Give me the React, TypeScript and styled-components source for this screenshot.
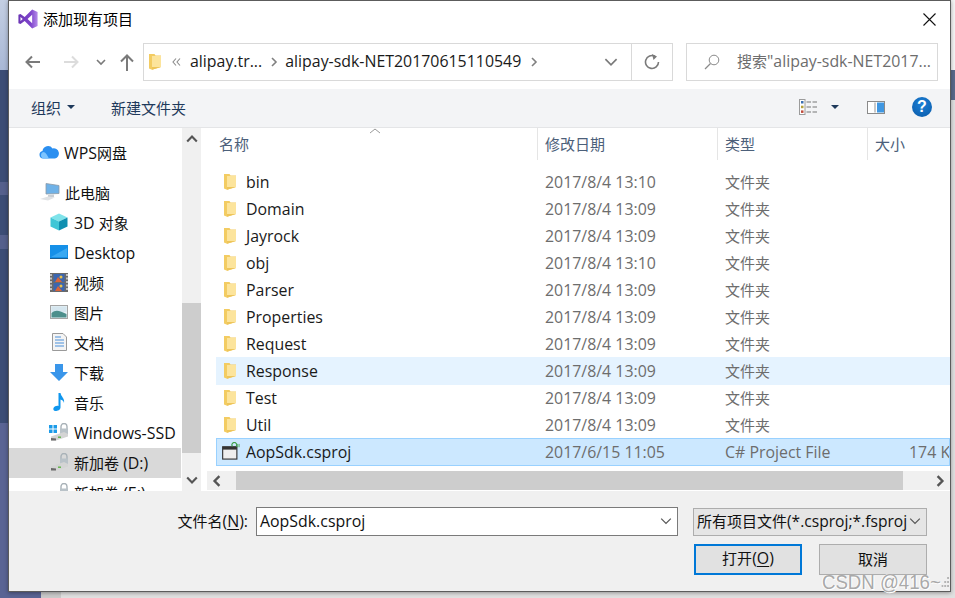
import React from 'react';
import styled, { createGlobalStyle } from 'styled-components';

const GlobalStyle = createGlobalStyle`
  html, body {
    margin: 0;
    padding: 0;
    background: #e2e2e2;
  }
  * {
    box-sizing: border-box;
  }
`;

const Page = styled.div`
  position: relative;
  width: 955px;
  height: 598px;
  overflow: hidden;
  font-family: "Open Sans", "Noto Sans CJK SC", sans-serif;
  font-size: 15px;
  color: #000;
  background:
    linear-gradient(#c4cfe3, #a9b8d6) 0 0 / 8px 70px no-repeat,
    linear-gradient(#55608c, #55608c) 0 182px / 8px 13px no-repeat,
    linear-gradient(#55608c, #55608c) 0 235px / 8px 14px no-repeat,
    linear-gradient(#3c4d75, #3c4d75) 0 70px / 8px 353px no-repeat,
    linear-gradient(#5a6494, #5a6494) 0 423px / 41px 175px no-repeat,
    linear-gradient(#cacaca, #cacaca) 41px 591px / 20px 7px no-repeat,
    linear-gradient(#f4f4f4, #f4f4f4) 951px 0 / 4px 70px no-repeat,
    linear-gradient(#5a6a8c, #5a6a8c) 951px 70px / 4px 30px no-repeat,
    #e0e0e0;
`;

// Latin runs come out narrower than the CJK ones at the same size
const Latin = styled.span`
  font-size: 15.9px;
`;

const ComboLatin = styled.span`
  font-size: 15.6px;
`;

const Dialog = styled.div`
  display: flex;
  flex-direction: column;
  width: 943px;
  height: 592px;
  margin-left: 8px;
  background: #fff;
  border: 1px solid #5c5c5c;
  box-shadow: 0 1px 4px rgba(0, 0, 0, 0.35);
`;

const TitleBar = styled.div`
  display: flex;
  align-items: center;
  height: 36px;
  padding: 0 14px 0 9px;
  flex: none;
`;

const TitleText = styled.span`
  margin: 0 0 2px 5px;
  flex: 1;
`;

const NavBar = styled.div`
  display: flex;
  align-items: center;
  height: 52px;
  padding: 6px 0 8px 16px;
  flex: none;
`;

const NavButton = styled.div<{ $gap: number }>`
  display: flex;
  margin-right: ${({ $gap }) => $gap}px;
`;

const AddressBox = styled.div`
  display: flex;
  align-items: center;
  width: 530px;
  height: 38px;
  padding-left: 5px;
  border: 1.5px solid #d9d9d9;
`;

const Crumb = styled(Latin)`
  margin-bottom: 2px;
  color: #1a1a1a;
  white-space: nowrap;
`;

const CrumbMark = styled.span<{ $left: number; $right: number }>`
  display: flex;
  margin: 0 ${({ $right }) => $right}px 0 ${({ $left }) => $left}px;
`;

const AddressEnd = styled.div`
  display: flex;
  align-items: center;
  justify-content: center;
  width: 41px;
  height: 100%;
  margin-left: auto;
  border-left: 1.5px solid #d9d9d9;
`;

const SearchBox = styled.div`
  display: flex;
  align-items: center;
  width: 252px;
  height: 38px;
  margin-left: 13px;
  padding-left: 17px;
  border: 1.5px solid #d9d9d9;
  color: #6d6d6d;
  white-space: nowrap;
  overflow: hidden;
`;

const SearchText = styled.span`
  margin: 0 0 2px 17px;
`;

const Toolbar = styled.div`
  display: flex;
  align-items: center;
  height: 39px;
  padding: 0 18px 2px 22px;
  background: #f3f4f6;
  border-bottom: 1px solid #e4e5e7;
  color: #1e395b;
  flex: none;
`;

const ToolButton = styled.span<{ $left?: number }>`
  display: flex;
  align-items: center;
  margin-left: ${({ $left }) => $left ?? 0}px;
`;

const Caret = styled.i<{ $left: number }>`
  width: 0;
  height: 0;
  margin-left: ${({ $left }) => $left}px;
  border-left: 4px solid transparent;
  border-right: 4px solid transparent;
  border-top: 4px solid #1e395b;
`;

const ToolSpacer = styled.span`
  flex: 1;
`;

const HelpBadge = styled.span`
  display: flex;
  align-items: center;
  justify-content: center;
  width: 20px;
  height: 20px;
  margin-left: 27px;
  border-radius: 50%;
  background: radial-gradient(circle at 50% 35%, #1c7fd6, #0a5aa8);
  color: #fff;
  font-family: "Liberation Sans", sans-serif;
  font-size: 16px;
  font-weight: 700;
`;

const Main = styled.div`
  display: flex;
  height: 363px;
  flex: none;
`;

const NavPane = styled.div`
  width: 173px;
  padding-top: 10px;
  overflow: hidden;
  flex: none;
`;

const TreeRow = styled.div<{ $indent: number; $selected?: boolean; $gapAfter?: boolean }>`
  display: flex;
  align-items: center;
  gap: 5px;
  width: 172px;
  height: 30px;
  padding-left: ${({ $indent }) => $indent}px;
  margin-bottom: ${({ $gapAfter }) => ($gapAfter ? 10 : 0)}px;
  background: ${({ $selected }) => ($selected ? '#d9d9d9' : 'transparent')};
  color: #111;
  white-space: nowrap;
  flex: none;
`;

const TreeIcon = styled.span`
  display: flex;
  align-items: center;
  justify-content: center;
  width: 20px;
  height: 20px;
  margin-bottom: 2px;
  flex: none;
`;

const TreeLabel = styled.span<{ $lift: number }>`
  margin-bottom: ${({ $lift }) => $lift}px;
`;

const VScroll = styled.div`
  display: flex;
  flex-direction: column;
  width: 19px;
  background: #f0f0f0;
  flex: none;
`;

const ScrollEnd = styled.div`
  display: flex;
  align-items: center;
  justify-content: center;
  height: 22px;
  flex: none;
`;

const VTrack = styled.div`
  flex: 1;
  padding: 153px 0 16px;
`;

const Thumb = styled.div`
  height: 100%;
  background: #cdcdcd;
`;

const ListPane = styled.div`
  display: flex;
  flex-direction: column;
  flex: 1;
  min-width: 0;
  overflow: hidden;
`;

const ColumnHeader = styled.div`
  position: relative;
  display: flex;
  height: 32px;
  flex: none;
  color: #4c607a;
`;

const HeaderCell = styled.div<{ $width: number; $pad: number; $last?: boolean }>`
  display: flex;
  align-items: center;
  width: ${({ $width }) => $width}px;
  padding: 0 0 2px ${({ $pad }) => $pad}px;
  border-right: ${({ $last }) => ($last ? 'none' : '1px solid #e5e5e5')};
  flex: none;
`;

const SortMark = styled.span`
  position: absolute;
  left: 168px;
  top: 0;
  display: flex;
`;

const FileList = styled.div`
  flex: 1;
  padding: 9px 0 0 15px;
  overflow: hidden;
`;

const FileRow = styled.div<{ $state?: 'hover' | 'selected' }>`
  display: grid;
  grid-template-columns: 320px 180px 150px 1fr;
  align-items: center;
  height: ${({ $state }) => ($state ? 28 : 27)}px;
  margin-top: ${({ $state }) => ($state ? -1 : 0)}px;
  padding: ${({ $state }) => ($state ? 1 : 0)}px 0 2px;
  border: 1px solid ${({ $state }) => ($state === 'selected' ? '#99d1ff' : 'transparent')};
  background: ${({ $state }) =>
    $state === 'selected' ? '#cce8ff' : $state === 'hover' ? '#e5f3ff' : 'transparent'};
  white-space: nowrap;
`;

const NameCell = styled.div`
  display: flex;
  align-items: center;
  gap: 6px;
  padding-left: 5px;
  color: #1a1a1a;
`;

const FileIcon = styled.span<{ $pad?: number }>`
  display: flex;
  align-items: center;
  width: 18px;
  height: 20px;
  padding-left: ${({ $pad }) => $pad ?? 0}px;
  flex: none;
`;

const InfoCell = styled.div`
  padding-left: 8px;
  color: #6d6d6d;
`;

const SizeCell = styled(InfoCell)`
  padding-left: 42px;
  overflow: hidden;
`;

const HScroll = styled.div`
  display: flex;
  height: 19px;
  margin: 0 0 1px 6px;
  background: #f0f0f0;
  flex: none;
`;

const HEnd = styled.div<{ $width: number; $pad: number }>`
  display: flex;
  align-items: center;
  width: ${({ $width }) => $width}px;
  padding-left: ${({ $pad }) => $pad}px;
  flex: none;
`;

const HThumb = styled.div`
  flex: 1;
  background: #cdcdcd;
`;

const Footer = styled.div`
  display: flex;
  flex-direction: column;
  flex: 1;
  padding: 16px 23px 0 0;
  background: #f0f0f0;
`;

const FieldRow = styled.div`
  display: flex;
  align-items: center;
  justify-content: flex-end;
  height: 29px;
`;

const FieldLabel = styled.span`
  margin: 0 8px 2px 0;
  color: #111;
  white-space: nowrap;
  u {
    text-underline-offset: 2px;
  }
`;

const NameInput = styled.div`
  display: flex;
  align-items: center;
  justify-content: space-between;
  width: 422px;
  height: 29px;
  padding: 0 5px 2px 3px;
  background: #fff;
  border: 1px solid #7a7a7a;
  color: #111;
`;

const FilterCombo = styled.div`
  display: flex;
  align-items: center;
  justify-content: space-between;
  width: 234px;
  height: 28px;
  margin-left: 15px;
  padding: 0 5px 2px 3px;
  background: #e5e5e5;
  border: 1px solid #adadad;
  color: #111;
  white-space: nowrap;
  overflow: hidden;
`;

const ButtonRow = styled.div`
  display: flex;
  justify-content: flex-end;
  gap: 17px;
  margin-top: 8px;
`;

const DialogButton = styled.div<{ $primary?: boolean }>`
  display: flex;
  align-items: center;
  justify-content: center;
  width: 108px;
  height: 31px;
  padding-bottom: 3px;
  background: #e1e1e1;
  border: ${({ $primary }) => ($primary ? '2px solid #0078d7' : '1px solid #adadad')};
  color: #111;
  white-space: pre;
  u {
    text-underline-offset: 2px;
  }
`;

const Watermark = styled.div`
  position: absolute;
  left: 822px;
  top: 571px;
  display: flex;
  align-items: center;
  gap: 1px;
  height: 22px;
  font-family: "Liberation Sans", sans-serif;
  font-size: 19.5px;
  color: #a9a9a9;
  text-shadow: 1px 1px 0 #fff, -1px 0 0 #fff;
  white-space: nowrap;
  transform: scaleX(0.955);
  transform-origin: left center;
`;

const Chevron = ({ dir, color = '#6a6a6a', size = 10, width = 1.6 }: { dir: 'up' | 'down' | 'left' | 'right'; color?: string; size?: number; width?: number }) => {
  const d = {
    up: 'M1 7 L5 3 L9 7',
    down: 'M1 3 L5 7 L9 3',
    left: 'M7 1 L3 5 L7 9',
    right: 'M3 1 L7 5 L3 9',
  }[dir];
  return (
    <svg width={size} height={size} viewBox="0 0 10 10">
      <path d={d} fill="none" stroke={color} strokeWidth={width} />
    </svg>
  );
};

const VsLogo = () => (
  <svg width="20" height="20" viewBox="0 0 24 24">
    <defs>
      <linearGradient id="vsg" x1="0" y1="0" x2="1" y2="0">
        <stop offset="0" stopColor="#6b35b5" />
        <stop offset="0.65" stopColor="#7f45cc" />
        <stop offset="1" stopColor="#b48ae8" />
      </linearGradient>
    </defs>
    <path
      fillRule="evenodd"
      fill="url(#vsg)"
      d="M17 0.5 L23.5 3.5 V20.5 L17 23.5 L8 14.5 L3 18 L0.5 17 V7 L3 6 L8 9.5 Z M17 7 L11.5 12 L17 17 Z M3 9.5 V14.5 L5.7 12 Z"
    />
  </svg>
);

const FolderIcon = () => (
  <svg width="12" height="16" viewBox="0 0 12 16">
    <path d="M0 0 H5.5 L6.5 1.5 H12 V13 L3 15.8 L0 14.5 Z" fill="#f3cc62" />
    <path d="M3 2 H12 V13 H3 Z" fill="#fce49c" />
    <path d="M3 13 H12 L3 15.8 Z" fill="#eec55a" />
  </svg>
);

const ProjectIcon = () => (
  <svg width="19" height="19" viewBox="0 0 19 19">
    <rect x="0.7" y="4.5" width="15" height="13" fill="#eeeeee" stroke="#333" strokeWidth="1.2" />
    <rect x="0.7" y="4.5" width="15" height="3" fill="#333" />
    <path d="M11 3 A2.5 2.5 0 1 1 15 3" fill="none" stroke="#3fa14b" strokeWidth="1.2" transform="translate(0 1)" />
    <path d="M16 1.5 V5 M18 1.5 V5" stroke="#3fa14b" strokeWidth="0.9" />
  </svg>
);

const CloudIcon = () => (
  <svg width="20" height="14" viewBox="0 0 20 14">
    <path d="M4 13.5 A3.8 3.8 0 0 1 3.5 6 A5.5 5.5 0 0 1 13.5 3.5 A4.5 4.5 0 0 1 16 13.5 Z" fill="#2b8ff0" />
    <path d="M4 13.5 A3.6 3.6 0 0 1 4 7 C7 7 8 10 10 13.5 Z" fill="#7cc4ff" />
  </svg>
);

const ComputerIcon = () => (
  <svg width="20" height="18" viewBox="0 0 20 18">
    <path d="M6 0.5 L19 2.5 V10.5 L6 11 Z" fill="#6fb2e8" stroke="#8d9aa6" strokeWidth="0.8" />
    <path d="M8 12 L14 11.5 L14 14 L8 14 Z" fill="#c9ced3" />
    <path d="M0 16 L8 13.5 L15 14.5 L8 17.5 Z" fill="#dfe2e5" />
  </svg>
);

const CubeIcon = () => (
  <svg width="18" height="18" viewBox="0 0 18 18">
    <path d="M9 0.5 L17.5 4.5 L9 8.5 L0.5 4.5 Z" fill="#7fe3ea" />
    <path d="M0.5 4.5 L9 8.5 V17.5 L0.5 13.5 Z" fill="#3fc6d6" />
    <path d="M17.5 4.5 L9 8.5 V17.5 L17.5 13.5 Z" fill="#0f8fb0" />
  </svg>
);

const DesktopIcon = () => (
  <svg width="18" height="14" viewBox="0 0 18 14">
    <rect width="18" height="13" fill="#1590e8" />
    <path d="M1 12 L17 3 V12 Z" fill="#3aa9f2" />
    <path d="M0 13 H18 V14 H0 Z" fill="#1c5f92" />
  </svg>
);

const FilmIcon = () => (
  <svg width="18" height="19" viewBox="0 0 18 19">
    <rect width="18" height="19" fill="#6a6a6a" />
    <path d="M1 1 V18 M17 1 V18" stroke="#d8d8d8" strokeWidth="1.6" strokeDasharray="2 1.5" />
    <rect x="3.5" y="1" width="11" height="8" fill="#3b66b0" />
    <rect x="3.5" y="10" width="11" height="8" fill="#3b66b0" />
    <path d="M5 9 L8 4 L12 9 Z M5 18 L8 13 L12 18 Z" fill="#d8643a" />
    <circle cx="11" cy="4" r="1.5" fill="#e8c24a" />
    <circle cx="11" cy="13" r="1.5" fill="#e8c24a" />
  </svg>
);

const PictureIcon = () => (
  <svg width="18" height="14" viewBox="0 0 18 14">
    <rect x="0.5" y="0.5" width="17" height="13" fill="#e8f1f6" stroke="#a5a5a5" />
    <path d="M1.5 1.5 H16.5 V7 H1.5 Z" fill="#d5e6ef" />
    <path d="M1.5 8 C6 4 10 6 16.5 9 V12.5 H1.5 Z" fill="#4d8f8c" />
  </svg>
);

const DocIcon = () => (
  <svg width="15" height="18" viewBox="0 0 15 18">
    <path d="M0.5 0.5 H11 L14.5 4 V17.5 H0.5 Z" fill="#f4f4f4" stroke="#9a9a9a" />
    <path d="M3 4 H9 M3 7 H12 M3 10 H12 M3 13 H12" stroke="#4a90d9" strokeWidth="1.2" />
  </svg>
);

const DownloadIcon = () => (
  <svg width="18" height="17" viewBox="0 0 18 17">
    <path d="M5 0 H13 V8 H18 L9 17 L0 8 H5 Z" fill="#3a96ea" />
  </svg>
);

const MusicIcon = () => (
  <svg width="12" height="18" viewBox="0 0 12 18">
    <path d="M5.5 0 H7.5 C8 4 12 5 11 10 C10.5 7.5 9 7 7.5 6.5 V14.5 C7.5 17 4.5 18 2.5 18 C0.5 18 0 16.5 0.5 15 C1.5 13 4 12.5 5.5 13 Z" fill="#0f96ee" />
  </svg>
);

const DriveIcon = ({ win }: { win?: boolean }) => (
  <svg width="20" height="18" viewBox="0 0 20 18">
    {win && <path d="M0 2 H3.5 V5.5 H0 Z M4.5 2 H8 V5.5 H4.5 Z M0 6.5 H3.5 V10 H0 Z M4.5 6.5 H8 V10 H4.5 Z" fill="#1c9be8" />}
    <path d="M12 6 V3.5 A3 3 0 0 1 18 3.5 V6" fill="none" stroke="#a9b2b8" strokeWidth="1.4" />
    <rect x="11" y="5.5" width="8" height="6.5" fill="#b9c2c8" />
    <path d="M2 13.5 L15 9 L19 11 V13.5 L7 17.5 H2 Z" fill="#d4d4d4" />
    <path d="M2 15 L7 15.5 V17.5 H2 Z" fill="#6a6a6a" />
    <rect x="9" y="13.5" width="3" height="1.4" fill="#5fb548" />
  </svg>
);

const ViewIcon = () => (
  <svg width="19" height="16" viewBox="0 0 19 16">
    <rect x="0.5" y="0.5" width="5.5" height="15" fill="#fff" stroke="#9b9b9b" />
    <rect x="2" y="2" width="2.5" height="2.5" fill="#3a6fb0" />
    <rect x="2" y="6.7" width="2.5" height="2.5" fill="#b5a03a" />
    <rect x="2" y="11.4" width="2.5" height="2.5" fill="#c04a3a" />
    <path d="M7.5 3 H12 M13.5 3 H18 M7.5 8 H12 M13.5 8 H18 M7.5 13 H12 M13.5 13 H18" stroke="#777" strokeWidth="1.1" />
  </svg>
);

const PanelIcon = () => (
  <svg width="18" height="13" viewBox="0 0 18 13">
    <rect x="0.5" y="0.5" width="17" height="12" fill="#fff" stroke="#8a8a8a" />
    <rect x="10" y="1.5" width="7" height="10" fill="#3f97e2" />
    <rect x="7" y="1.5" width="2" height="10" fill="#c9c9c9" />
  </svg>
);

const WatermarkDots = () => (
  <svg width="9" height="10" viewBox="0 0 9 10">
    <path d="M6 0 H8 V2 H6 Z M3 4 H5 V6 H3 Z M6 4 H8 V6 H6 Z M0 8 H2 V10 H0 Z M3 8 H5 V10 H3 Z M6 8 H8 V10 H6 Z" fill="#b5b5b5" />
  </svg>
);

const folders = [
  ['bin', '2017/8/4 13:10'],
  ['Domain', '2017/8/4 13:09'],
  ['Jayrock', '2017/8/4 13:09'],
  ['obj', '2017/8/4 13:10'],
  ['Parser', '2017/8/4 13:09'],
  ['Properties', '2017/8/4 13:09'],
  ['Request', '2017/8/4 13:09'],
  ['Response', '2017/8/4 13:09'],
  ['Test', '2017/8/4 13:09'],
  ['Util', '2017/8/4 13:09'],
];

const App = () => (
  <Page>
    <GlobalStyle />
    <Dialog>
      <TitleBar>
        <VsLogo />
        <TitleText>添加现有项目</TitleText>
        <svg width="13" height="13" viewBox="0 0 13 13">
          <path d="M0.5 0.5 L12.5 12.5 M12.5 0.5 L0.5 12.5" stroke="#111" strokeWidth="1.1" />
        </svg>
      </TitleBar>

      <NavBar>
        <NavButton $gap={24}>
          <svg width="15" height="14" viewBox="0 0 15 14">
            <path d="M15 7 H1.5 M7 1.5 L1.5 7 L7 12.5" fill="none" stroke="#7a7a7a" strokeWidth="2" />
          </svg>
        </NavButton>
        <NavButton $gap={17}>
          <svg width="15" height="14" viewBox="0 0 15 14">
            <path d="M0 7 H13.5 M8 1.5 L13.5 7 L8 12.5" fill="none" stroke="#dcdcdc" strokeWidth="2" />
          </svg>
        </NavButton>
        <NavButton $gap={14}>
          <Chevron dir="down" color="#7a7a7a" />
        </NavButton>
        <NavButton $gap={9}>
          <svg width="14" height="17" viewBox="0 0 14 17">
            <path d="M7 17 V2 M1 7.5 L7 1.5 L13 7.5" fill="none" stroke="#7a7a7a" strokeWidth="2" />
          </svg>
        </NavButton>
        <AddressBox>
          <FolderIcon />
          <CrumbMark $left={11} $right={9}>
            <svg width="9" height="10" viewBox="0 0 9 10">
              <path d="M4 1.5 L1 5 L4 8.5 M8 1.5 L5 5 L8 8.5" fill="none" stroke="#8a8a8a" strokeWidth="1.1" />
            </svg>
          </CrumbMark>
          <Crumb>alipay.tr...</Crumb>
          <CrumbMark $left={7} $right={6}>
            <Chevron dir="right" color="#808080" />
          </CrumbMark>
          <Crumb>alipay-sdk-NET20170615110549</Crumb>
          <CrumbMark $left={8} $right={0}>
            <Chevron dir="right" color="#808080" />
          </CrumbMark>
          <CrumbMark $left={65} $right={12}>
            <Chevron dir="down" color="#7a7a7a" size={14} width={1.2} />
          </CrumbMark>
          <AddressEnd>
            <svg width="16" height="16" viewBox="0 0 16 16">
              <path d="M11 2.2 A6.5 6.5 0 1 0 14.5 8" fill="none" stroke="#7a7a7a" strokeWidth="1.6" />
              <path d="M8 0 L13 2.5 L9.5 6 Z" fill="#7a7a7a" />
            </svg>
          </AddressEnd>
        </AddressBox>
        <SearchBox>
          <svg width="16" height="16" viewBox="0 0 16 16">
            <circle cx="10" cy="6" r="4.8" fill="none" stroke="#8a8a8a" strokeWidth="1" />
            <path d="M6.5 9.5 L1 15" stroke="#8a8a8a" strokeWidth="1.3" />
          </svg>
          <SearchText>搜索<Latin>"alipay-sdk-NET2017...</Latin></SearchText>
        </SearchBox>
      </NavBar>

      <Toolbar>
        <ToolButton>
          组织
          <Caret $left={6} />
        </ToolButton>
        <ToolButton $left={36}>新建文件夹</ToolButton>
        <ToolSpacer />
        <ViewIcon />
        <Caret $left={13} />
        <ToolButton $left={28}>
          <PanelIcon />
        </ToolButton>
        <HelpBadge>?</HelpBadge>
      </Toolbar>

      <Main>
        <NavPane>
          <TreeRow $indent={30} $gapAfter>
            <TreeIcon><CloudIcon /></TreeIcon>
            <TreeLabel $lift={0}><Latin>WPS</Latin>网盘</TreeLabel>
          </TreeRow>
          <TreeRow $indent={31}>
            <TreeIcon><ComputerIcon /></TreeIcon>
            <TreeLabel $lift={2}>此电脑</TreeLabel>
          </TreeRow>
          <TreeRow $indent={40}>
            <TreeIcon><CubeIcon /></TreeIcon>
            <TreeLabel $lift={0}><Latin>3D </Latin>对象</TreeLabel>
          </TreeRow>
          <TreeRow $indent={40}>
            <TreeIcon><DesktopIcon /></TreeIcon>
            <TreeLabel $lift={0}><Latin>Desktop</Latin></TreeLabel>
          </TreeRow>
          <TreeRow $indent={40}>
            <TreeIcon><FilmIcon /></TreeIcon>
            <TreeLabel $lift={2}>视频</TreeLabel>
          </TreeRow>
          <TreeRow $indent={40}>
            <TreeIcon><PictureIcon /></TreeIcon>
            <TreeLabel $lift={2}>图片</TreeLabel>
          </TreeRow>
          <TreeRow $indent={40}>
            <TreeIcon><DocIcon /></TreeIcon>
            <TreeLabel $lift={2}>文档</TreeLabel>
          </TreeRow>
          <TreeRow $indent={40}>
            <TreeIcon><DownloadIcon /></TreeIcon>
            <TreeLabel $lift={2}>下载</TreeLabel>
          </TreeRow>
          <TreeRow $indent={40}>
            <TreeIcon><MusicIcon /></TreeIcon>
            <TreeLabel $lift={2}>音乐</TreeLabel>
          </TreeRow>
          <TreeRow $indent={40}>
            <TreeIcon><DriveIcon win /></TreeIcon>
            <TreeLabel $lift={0}><Latin>Windows-SSD</Latin></TreeLabel>
          </TreeRow>
          <TreeRow $indent={40} $selected>
            <TreeIcon><DriveIcon /></TreeIcon>
            <TreeLabel $lift={0}>新加卷<Latin> (D:)</Latin></TreeLabel>
          </TreeRow>
          <TreeRow $indent={40}>
            <TreeIcon><DriveIcon /></TreeIcon>
            <TreeLabel $lift={0}>新加卷<Latin> (E:)</Latin></TreeLabel>
          </TreeRow>
        </NavPane>

        <VScroll>
          <ScrollEnd><Chevron dir="up" color="#555" size={12} width={1.8} /></ScrollEnd>
          <VTrack><Thumb /></VTrack>
          <ScrollEnd><Chevron dir="down" color="#555" size={12} width={1.8} /></ScrollEnd>
        </VScroll>

        <ListPane>
          <ColumnHeader>
            <HeaderCell $width={337} $pad={18}>名称</HeaderCell>
            <HeaderCell $width={180} $pad={7}>修改日期</HeaderCell>
            <HeaderCell $width={150} $pad={7}>类型</HeaderCell>
            <HeaderCell $width={80} $pad={7} $last>大小</HeaderCell>
            <SortMark>
              <svg width="12" height="6" viewBox="0 0 12 6">
                <path d="M1 5 L6 1 L11 5" fill="none" stroke="#9a9a9a" strokeWidth="1" />
              </svg>
            </SortMark>
          </ColumnHeader>
          <FileList>
            {folders.map(([name, date]) => (
              <FileRow key={name} $state={name === 'Response' ? 'hover' : undefined}>
                <NameCell>
                  <FileIcon $pad={2}><FolderIcon /></FileIcon>
                  <Latin>{name}</Latin>
                </NameCell>
                <InfoCell><Latin>{date}</Latin></InfoCell>
                <InfoCell>文件夹</InfoCell>
                <SizeCell />
              </FileRow>
            ))}
            <FileRow $state="selected">
              <NameCell>
                <FileIcon><ProjectIcon /></FileIcon>
                <Latin>AopSdk.csproj</Latin>
              </NameCell>
              <InfoCell><Latin>2017/6/15 11:05</Latin></InfoCell>
              <InfoCell><Latin>C# Project File</Latin></InfoCell>
              <SizeCell><Latin>174 KB</Latin></SizeCell>
            </FileRow>
          </FileList>
          <HScroll>
            <HEnd $width={29} $pad={4}><Chevron dir="left" color="#555" size={12} width={2} /></HEnd>
            <HThumb />
            <HEnd $width={47} $pad={31}><Chevron dir="right" color="#555" size={12} width={2} /></HEnd>
          </HScroll>
        </ListPane>
      </Main>

      <Footer>
        <FieldRow>
          <FieldLabel>文件名<Latin>(<u>N</u>):</Latin></FieldLabel>
          <NameInput>
            <Latin>AopSdk.csproj</Latin>
            <Chevron dir="down" color="#555" size={12} width={1} />
          </NameInput>
          <FilterCombo>
            <span>所有项目文件<ComboLatin>(*.csproj;*.fsproj</ComboLatin></span>
            <Chevron dir="down" color="#555" size={12} width={1} />
          </FilterCombo>
        </FieldRow>
        <ButtonRow>
          <DialogButton $primary><span>打开<Latin>(<u>O</u>)</Latin></span></DialogButton>
          <DialogButton>取消</DialogButton>
        </ButtonRow>
      </Footer>
    </Dialog>
    <Watermark>
      CSDN @416~
      <WatermarkDots />
    </Watermark>
  </Page>
);

export default App;
